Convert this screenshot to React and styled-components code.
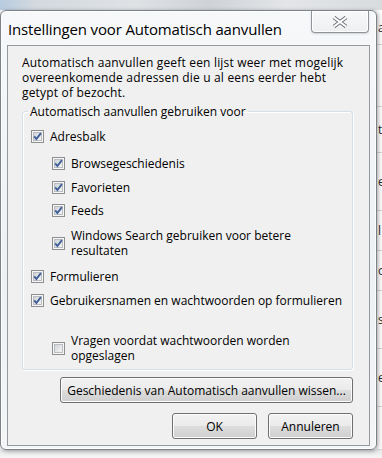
import React, { useId } from "react";
import styled, { createGlobalStyle } from "styled-components";

const GlobalStyle = createGlobalStyle`
    html, body {
        margin: 0;
        padding: 0;
    }
    body {
        width: 382px;
        height: 458px;
        overflow: hidden;
        background: #f2f3f4;
        font-family: "Open Sans", "Noto Sans", sans-serif;
    }
`;

const Screen = styled.div`
    width: 382px;
    height: 458px;
    display: grid;
    grid-template-columns: 377px 5px;
    grid-template-rows: 10px 440px 8px;
    overflow: hidden;
`;

const TopStrip = styled.div`
    grid-column: 1 / 3;
    background: linear-gradient(90deg, #b8cbe0 0, #d3d9df 9%, #dfe2e5 35%, #cfd3d7 55%, #e3e5e8 75%, #d9dcdf 100%);
`;

const BottomStrip = styled.div`
    grid-column: 1 / 3;
    background: linear-gradient(180deg, #e6e7e8 0, #f6f6f6 100%);
`;

const SideList = styled.div`
    display: flex;
    flex-direction: column;
    background: #fbfbfb;
    overflow: hidden;
`;

const SideItem = styled.div`
    height: ${(p) => p.h}px;
    flex: none;
    box-sizing: border-box;
    border-bottom: 1px solid #d4d4d4;
    display: flex;
    align-items: center;
    padding-left: 1px;
    font-size: 12px;
    color: #2a2a2a;
    white-space: nowrap;
`;

const Window = styled.div`
    position: relative;
    z-index: 1;
    box-sizing: border-box;
    height: 440px;
    display: flex;
    flex-direction: column;
    border: 1px solid #7d8288;
    border-radius: 6px;
    background: linear-gradient(180deg, #f6f8fa 0, #eef1f4 60%, #f3f5f7 100%);
    box-shadow: 1px 1px 4px rgba(0, 0, 0, 0.35), inset 0 0 0 1px rgba(255, 255, 255, 0.8);
`;

const TitleBar = styled.div`
    height: 34px;
    flex: none;
    display: flex;
    justify-content: space-between;
    align-items: flex-start;
    padding: 0 7px 0 7px;
`;

const Title = styled.div`
    padding-top: 8px;
    font-size: 15px;
    line-height: 20px;
    letter-spacing: -0.15px;
    color: #000;
    white-space: nowrap;
    text-shadow: 0 0 6px #fff, 0 0 10px #fff;
`;

const CloseButton = styled.div`
    width: 58px;
    height: 22px;
    box-sizing: border-box;
    border: 1px solid #8f949a;
    border-top: none;
    border-radius: 0 0 4px 4px;
    background: linear-gradient(180deg, #f7f8f9 0, #edeff1 100%);
    box-shadow: inset 0 0 0 1px rgba(255, 255, 255, 0.9), 0 1px 2px rgba(0, 0, 0, 0.15);
    display: flex;
    align-items: center;
    justify-content: center;
`;

const Client = styled.div`
    flex: 1;
    margin: 0 6px 6px 6px;
    border: 1px solid #969a9f;
    background: #f0f0f0;
    padding: 9px 16px 6px 14px;
    display: flex;
    flex-direction: column;
    font-size: 12px;
    line-height: 15px;
    color: #000;
`;

const Description = styled.p`
    margin: 0;
    white-space: nowrap;
    letter-spacing: 0.18px;
`;

const Group = styled.fieldset`
    margin: 4px 0 0 0;
    min-width: 0;
    padding: 10px 8px 6px 8px;
    border: 1px solid #d5dfe5;
    border-radius: 3px;
    box-shadow: inset 1px 1px 0 #fff, 1px 1px 0 #fff;
    display: flex;
    flex-direction: column;
`;

const Legend = styled.legend`
    margin-left: -3px;
    padding: 0 2px;
    white-space: nowrap;
`;

const Row = styled.div`
    display: flex;
    align-items: center;
    gap: 6px;
    margin-top: ${(p) => p.gap || 0}px;
    margin-left: ${(p) => (p.indent ? 21 : 0)}px;
    white-space: nowrap;
`;

const Button = styled.div`
    box-sizing: border-box;
    width: ${(p) => p.w}px;
    height: 26px;
    border: 1px solid #707070;
    border-radius: 3px;
    background: linear-gradient(180deg, #f2f2f2 0, #ebebeb 48%, #dddddd 52%, #cfcfcf 100%);
    box-shadow: inset 0 0 0 1px #fcfcfc;
    display: flex;
    align-items: center;
    justify-content: center;
    white-space: nowrap;
`;

const ClearRow = styled.div`
    display: flex;
    justify-content: flex-end;
    margin-top: 7px;
`;

const ButtonRow = styled.div`
    display: flex;
    justify-content: flex-end;
    gap: 11px;
    margin-top: 10px;
`;

function CheckBox({ checked }) {
    const id = useId();
    return (
        <svg width="13" height="13" viewBox="0 0 13 13" style={{ flex: "none" }}>
            <defs>
                <linearGradient id={id} x1="0" y1="0" x2="1" y2="1">
                    <stop offset="0" stopColor="#cdd1d6" />
                    <stop offset="1" stopColor="#f7f7f7" />
                </linearGradient>
            </defs>
            <rect x="0.5" y="0.5" width="12" height="12" fill="#f6f6f6" stroke="#8e8f8f" />
            <rect x="2.5" y="2.5" width="8" height="8" fill={`url(#${id})`} stroke="#b9bdc2" />
            {checked && (
                <path d="M3.2 6.4 L5.4 9 L9.9 3.2" fill="none" stroke="#3f5e98" strokeWidth="1.9" strokeLinejoin="miter" />
            )}
        </svg>
    );
}

function CloseGlyph() {
    const d = "M2 1.5 L14 10.5 M14 1.5 L2 10.5";
    return (
        <svg width="16" height="12" viewBox="0 0 16 12">
            <path d={d} stroke="#757a80" strokeWidth="4" fill="none" />
            <path d={d} stroke="#ffffff" strokeWidth="2" fill="none" />
        </svg>
    );
}

const sideItems = [
    { h: 35, t: "a" },
    { h: 62, t: "" },
    { h: 46, t: "te" },
    { h: 58, t: "e" },
    { h: 40, t: "l" },
    { h: 40, t: "o" },
    { h: 58, t: "s" },
    { h: 58, t: "e" },
    { h: 43, t: "" },
];

function App() {
    return (
        <>
            <GlobalStyle />
            <Screen>
                <TopStrip />
                <Window>
                    <TitleBar>
                        <Title>Instellingen voor Automatisch aanvullen</Title>
                        <CloseButton>
                            <CloseGlyph />
                        </CloseButton>
                    </TitleBar>
                    <Client>
                        <Description>
                            Automatisch aanvullen geeft een lijst weer met mogelijk
                            <br />
                            overeenkomende adressen die u al eens eerder hebt
                            <br />
                            getypt of bezocht.
                        </Description>
                        <Group>
                            <Legend>Automatisch aanvullen gebruiken voor</Legend>
                            <Row>
                                <CheckBox checked />
                                <span>Adresbalk</span>
                            </Row>
                            <Row indent gap={12}>
                                <CheckBox checked />
                                <span>Browsegeschiedenis</span>
                            </Row>
                            <Row indent gap={9}>
                                <CheckBox checked />
                                <span>Favorieten</span>
                            </Row>
                            <Row indent gap={8}>
                                <CheckBox checked />
                                <span>Feeds</span>
                            </Row>
                            <Row indent gap={10}>
                                <CheckBox checked />
                                <span>
                                    Windows Search gebruiken voor betere
                                    <br />
                                    resultaten
                                </span>
                            </Row>
                            <Row gap={11}>
                                <CheckBox checked />
                                <span>Formulieren</span>
                            </Row>
                            <Row gap={9}>
                                <CheckBox checked />
                                <span>Gebruikersnamen en wachtwoorden op formulieren</span>
                            </Row>
                            <Row indent gap={25}>
                                <CheckBox />
                                <span>
                                    Vragen voordat wachtwoorden worden
                                    <br />
                                    opgeslagen
                                </span>
                            </Row>
                        </Group>
                        <ClearRow>
                            <Button w={293}>Geschiedenis van Automatisch aanvullen wissen...</Button>
                        </ClearRow>
                        <ButtonRow>
                            <Button w={85}>OK</Button>
                            <Button w={85}>Annuleren</Button>
                        </ButtonRow>
                    </Client>
                </Window>
                <SideList>
                    {sideItems.map((item, i) => (
                        <SideItem key={i} h={item.h}>
                            {item.t}
                        </SideItem>
                    ))}
                </SideList>
                <BottomStrip />
            </Screen>
        </>
    );
}

export default App;
